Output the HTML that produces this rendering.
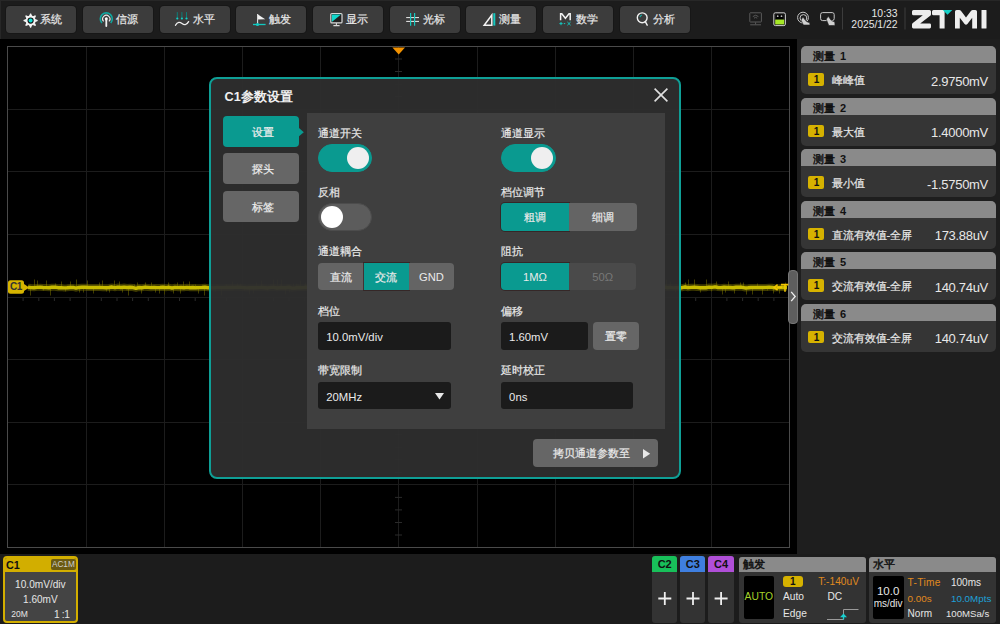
<!DOCTYPE html>
<html><head><meta charset="utf-8">
<style>
*{box-sizing:border-box;margin:0;padding:0}
html,body{width:1000px;height:624px;overflow:hidden;background:#000;font-family:"Liberation Sans",sans-serif;color:#e6e6e6}
.abs{position:absolute}
#top{left:0;top:0;width:1000px;height:39px;background:#1c1c1c;box-shadow:inset 1px 1px 0 #272727}
.tb{position:absolute;box-shadow:0 0 0 1px #171717;top:6.1px;width:70px;height:26.6px;background:#3c3c3c;border-radius:4px;font-size:10.5px;color:#e8e8e8}
.tb span{position:absolute;top:6.7px;line-height:12px;white-space:nowrap;-webkit-text-stroke:0.2px #e8e8e8}
#scope{left:0;top:0;width:797px;height:554px;background:#000}
#rp{left:797px;top:39px;width:203px;height:515px;background:#1e1e1e}
.card{position:absolute;left:3.6px;width:195.4px;height:48.2px;background:#353535;border-radius:5px;overflow:hidden}
.card .h{position:absolute;left:0;top:0;width:100%;height:17.1px;background:#8a8a8a;color:#111;font-weight:bold;font-size:11px;line-height:20.5px;padding-left:12.4px}
.card .b{position:absolute;left:7.9px;top:26.9px;width:15.9px;height:12.9px;background:#d6b200;border-radius:2px;color:#111;font-size:10px;font-weight:bold;text-align:center;line-height:13px}
.card .n{position:absolute;left:31px;top:27.2px;font-size:11px;line-height:15px;color:#e8e8e8;white-space:nowrap;-webkit-text-stroke:0.2px #e8e8e8}
.card .v{position:absolute;right:8px;top:27.5px;font-size:13px;line-height:15px;color:#e8e8e8;letter-spacing:-0.3px}
#bot{left:0;top:554px;width:1000px;height:70px;background:#1c1c1c}
#dlg{left:208.5px;top:76.5px;width:472.8px;height:402.9px;background:rgba(46,46,46,0.95);border:2px solid #0f9f96;border-radius:8px}
.dt{position:absolute;left:14px;top:11px;font-size:12.7px;font-weight:bold;line-height:14px;color:#f0f0f0;white-space:nowrap}
.tab{position:absolute;left:12.2px;width:76px;height:30.9px;background:#666;border-radius:4px;font-size:11px;line-height:32px;text-align:center;padding-left:5px;color:#eee;-webkit-text-stroke:0.2px #eee}
.tab.on{background:#0a9a90}
#inner{left:96px;top:34.5px;width:358.5px;height:315.5px;background:rgba(64,64,64,0.95)}
.lbl{position:absolute;font-size:11px;line-height:14px;color:#e8e8e8;white-space:nowrap;-webkit-text-stroke:0.2px #e8e8e8}
.tog{position:absolute;width:54.8px;height:27.9px;border-radius:14px;background:#5c5c5c;border:1px solid #4c4c4c}
.tog i{position:absolute;top:2px;left:2px;width:22px;height:22px;border-radius:50%;background:#fff}
.tog.on{background:#0a9a90;border-color:#0a9a90}
.tog.on i{left:auto;right:2px;background:#efefef}
.seg{position:absolute;height:27.7px}
.s{position:absolute;top:0;height:27.7px;background:#646464;font-size:11px;line-height:29.5px;text-align:center;color:#eaeaea;-webkit-text-stroke:0.2px #eaeaea}
.s.on{background:#0a9a90;box-shadow:0 0 0 1px rgba(50,30,30,0.7)}
.s.en{font-size:11.2px;line-height:28.5px;-webkit-text-stroke:0}
.s.dis{background:#4a4a4a;color:#787878;-webkit-text-stroke:0}
.inp{position:absolute;height:27.3px;background:#1b1b1b;border-radius:3px;font-size:11.3px;line-height:30.5px;padding-left:8.3px;color:#eaeaea}
.btn{position:absolute;background:#666;border-radius:4px;font-size:11px;text-align:center;color:#eaeaea;-webkit-text-stroke:0.2px #eaeaea}
.chc{position:absolute;top:2.2px;width:25.2px;height:66.4px;background:#333;border-radius:3px;overflow:hidden}
.chc .hd{height:15.8px;color:#111;font-weight:bold;font-size:11px;line-height:16px;text-align:center}
.pnl{position:absolute;top:2.6px;height:66px;background:#333;border-radius:3px;overflow:hidden}
.pnl .hd{height:15.1px;background:#8a8a8a;color:#111;font-weight:bold;font-size:11px;line-height:15px;padding-left:4px}
.t10{position:absolute;font-size:10.2px;line-height:11px;color:#e6e6e6;white-space:nowrap}
.k{font-weight:normal;-webkit-text-stroke:0.45px #111}
.bx{position:absolute;top:19px;height:43.6px;background:#000;border-radius:2px}
</style></head><body>
<div id="scope" class="abs">
<svg class="abs" style="left:0;top:0" width="797" height="554" viewBox="0 0 797 554"><path d="M86.5 47V547 M164.5 47V547 M242.5 47V547 M320.5 47V547 M398.5 47V547 M477.5 47V547 M555.5 47V547 M633.5 47V547 M711.5 47V547 M8 109.5H789 M8 171.5H789 M8 234.5H789 M8 297.5H789 M8 359.5H789 M8 422.5H789 M8 484.5H789" stroke="#1c1c1c" stroke-width="1" fill="none"/><path d="M23.1 298V301 M38.8 298V301 M54.4 298V301 M70.1 298V301 M101.3 298V301 M117.0 298V301 M132.6 298V301 M148.3 298V301 M179.5 298V301 M195.2 298V301 M210.8 298V301 M226.5 298V301 M257.7 298V301 M273.4 298V301 M289.0 298V301 M304.7 298V301 M335.9 298V301 M351.6 298V301 M367.2 298V301 M382.9 298V301 M414.1 298V301 M429.8 298V301 M445.4 298V301 M461.1 298V301 M492.3 298V301 M508.0 298V301 M523.6 298V301 M539.3 298V301 M570.5 298V301 M586.2 298V301 M601.8 298V301 M617.5 298V301 M648.7 298V301 M664.4 298V301 M680.0 298V301 M695.7 298V301 M726.9 298V301 M742.6 298V301 M758.2 298V301 M773.9 298V301 M395 59.0H402 M395 71.5H402 M395 84.1H402 M395 96.6H402 M395 121.7H402 M395 134.2H402 M395 146.7H402 M395 159.2H402 M395 184.3H402 M395 196.8H402 M395 209.3H402 M395 221.8H402 M395 246.9H402 M395 259.4H402 M395 271.9H402 M395 284.5H402 M395 309.5H402 M395 322.1H402 M395 334.6H402 M395 347.1H402 M395 372.1H402 M395 384.7H402 M395 397.2H402 M395 409.7H402 M395 434.8H402 M395 447.3H402 M395 459.8H402 M395 472.4H402 M395 497.4H402 M395 509.9H402 M395 522.5H402 M395 535.0H402" stroke="#2a2a2a" stroke-width="1" fill="none"/><rect x="7.5" y="46.5" width="782" height="501" stroke="#4a4a4a" stroke-width="1" fill="none"/><path d="M30.5 287.5V295.5 M34.5 287.5V279.5 M37.5 287.5V280.5 M43.5 287.5V290.5 M46.5 287.5V280.5 M50.5 287.5V295.5 M55.5 287.5V283.5 M61.5 287.5V281.5 M65.5 287.5V291.5 M70.5 287.5V281.5 M76.5 287.5V279.5 M79.5 287.5V292.5 M83.5 287.5V292.5 M87.5 287.5V280.5 M93.5 287.5V293.5 M99.5 287.5V282.5 M102.5 287.5V280.5 M106.5 287.5V291.5 M109.5 287.5V292.5 M114.5 287.5V280.5 M119.5 287.5V281.5 M122.5 287.5V292.5 M128.5 287.5V295.5 M134.5 287.5V284.5 M137.5 287.5V282.5 M141.5 287.5V293.5 M145.5 287.5V282.5 M151.5 287.5V282.5 M155.5 287.5V292.5 M159.5 287.5V293.5 M164.5 287.5V294.5 M168.5 287.5V282.5 M173.5 287.5V293.5 M177.5 287.5V282.5 M180.5 287.5V293.5 M183.5 287.5V281.5 M189.5 287.5V281.5 M195.5 287.5V284.5 M198.5 287.5V293.5 M204.5 287.5V295.5 M209.5 287.5V291.5 M215.5 287.5V291.5 M221.5 287.5V295.5 M226.5 287.5V284.5 M232.5 287.5V281.5 M237.5 287.5V283.5 M240.5 287.5V283.5 M244.5 287.5V290.5 M249.5 287.5V294.5 M253.5 287.5V293.5 M256.5 287.5V282.5 M261.5 287.5V280.5 M267.5 287.5V290.5 M273.5 287.5V279.5 M277.5 287.5V279.5 M281.5 287.5V279.5 M285.5 287.5V294.5 M289.5 287.5V292.5 M293.5 287.5V283.5 M296.5 287.5V283.5 M300.5 287.5V280.5 M305.5 287.5V282.5 M311.5 287.5V295.5 M315.5 287.5V291.5 M318.5 287.5V284.5 M323.5 287.5V295.5 M326.5 287.5V294.5 M330.5 287.5V279.5 M336.5 287.5V284.5 M339.5 287.5V295.5 M343.5 287.5V283.5 M346.5 287.5V283.5 M350.5 287.5V282.5 M353.5 287.5V291.5 M356.5 287.5V279.5 M361.5 287.5V292.5 M367.5 287.5V293.5 M373.5 287.5V291.5 M376.5 287.5V280.5 M380.5 287.5V291.5 M386.5 287.5V292.5 M392.5 287.5V283.5 M395.5 287.5V281.5 M400.5 287.5V290.5 M404.5 287.5V293.5 M409.5 287.5V282.5 M413.5 287.5V295.5 M417.5 287.5V292.5 M423.5 287.5V279.5 M429.5 287.5V283.5 M432.5 287.5V295.5 M437.5 287.5V282.5 M440.5 287.5V282.5 M444.5 287.5V292.5 M449.5 287.5V291.5 M453.5 287.5V281.5 M459.5 287.5V293.5 M463.5 287.5V280.5 M469.5 287.5V281.5 M472.5 287.5V281.5 M476.5 287.5V292.5 M482.5 287.5V281.5 M486.5 287.5V294.5 M489.5 287.5V290.5 M494.5 287.5V292.5 M500.5 287.5V281.5 M506.5 287.5V279.5 M509.5 287.5V282.5 M515.5 287.5V282.5 M521.5 287.5V281.5 M527.5 287.5V292.5 M532.5 287.5V293.5 M537.5 287.5V292.5 M543.5 287.5V294.5 M548.5 287.5V294.5 M551.5 287.5V284.5 M554.5 287.5V280.5 M560.5 287.5V295.5 M563.5 287.5V292.5 M566.5 287.5V293.5 M569.5 287.5V279.5 M575.5 287.5V294.5 M580.5 287.5V279.5 M583.5 287.5V281.5 M589.5 287.5V283.5 M592.5 287.5V290.5 M598.5 287.5V284.5 M601.5 287.5V282.5 M604.5 287.5V292.5 M608.5 287.5V294.5 M614.5 287.5V293.5 M620.5 287.5V282.5 M625.5 287.5V280.5 M629.5 287.5V282.5 M634.5 287.5V295.5 M639.5 287.5V282.5 M644.5 287.5V279.5 M648.5 287.5V283.5 M651.5 287.5V280.5 M654.5 287.5V292.5 M660.5 287.5V284.5 M663.5 287.5V291.5 M666.5 287.5V279.5 M670.5 287.5V281.5 M675.5 287.5V292.5 M680.5 287.5V291.5 M685.5 287.5V282.5 M688.5 287.5V279.5 M694.5 287.5V279.5 M700.5 287.5V292.5 M706.5 287.5V279.5 M711.5 287.5V291.5 M716.5 287.5V281.5 M722.5 287.5V294.5 M725.5 287.5V292.5 M728.5 287.5V281.5 M734.5 287.5V293.5 M740.5 287.5V282.5 M743.5 287.5V282.5 M746.5 287.5V294.5 M752.5 287.5V294.5 M757.5 287.5V283.5 M762.5 287.5V294.5 M767.5 287.5V290.5 M773.5 287.5V293.5 M779.5 287.5V293.5 M785.5 287.5V282.5" stroke="#403c00" stroke-width="1" fill="none"/><path d="M28 287.19 L31 287.59 L34 287.75 L37 287.37 L40 287.17 L43 287.48 L46 287.62 L49 287.77 L52 287.20 L55 287.18 L58 287.68 L61 287.62 L64 287.88 L67 287.75 L70 287.47 L73 287.43 L76 288.14 L79 287.43 L82 287.30 L85 287.22 L88 287.52 L91 287.54 L94 287.41 L97 287.48 L100 287.57 L103 287.67 L106 287.77 L109 287.55 L112 287.05 L115 287.68 L118 287.15 L121 287.46 L124 287.13 L127 287.50 L130 287.31 L133 287.55 L136 288.33 L139 287.49 L142 287.71 L145 287.17 L148 287.43 L151 287.67 L154 287.48 L157 287.59 L160 287.53 L163 287.25 L166 287.64 L169 287.30 L172 287.97 L175 287.37 L178 287.67 L181 287.50 L184 287.74 L187 287.35 L190 287.75 L193 287.47 L196 287.82 L199 287.66 L202 287.54 L205 287.30 L208 287.69 L211 287.62 L214 287.91 L217 287.41 L220 287.64 L223 287.63 L226 287.57 L229 287.55 L232 287.55 L235 287.35 L238 287.25 L241 287.40 L244 287.65 L247 287.88 L250 287.74 L253 287.76 L256 287.69 L259 287.67 L262 287.55 L265 287.69 L268 287.94 L271 287.42 L274 287.33 L277 287.99 L280 287.56 L283 287.74 L286 287.72 L289 287.22 L292 288.11 L295 287.94 L298 287.54 L301 287.69 L304 287.53 L307 287.28 L310 287.47 L313 287.59 L316 287.78 L319 287.68 L322 287.51 L325 287.84 L328 287.31 L331 287.70 L334 287.78 L337 287.43 L340 287.05 L343 287.27 L346 287.56 L349 287.63 L352 287.89 L355 287.25 L358 287.50 L361 287.66 L364 287.46 L367 286.91 L370 287.70 L373 288.08 L376 287.75 L379 287.27 L382 287.40 L385 287.56 L388 288.12 L391 287.65 L394 287.53 L397 287.89 L400 287.48 L403 287.97 L406 287.33 L409 287.38 L412 287.68 L415 287.86 L418 287.66 L421 287.58 L424 287.04 L427 287.32 L430 287.35 L433 287.37 L436 287.65 L439 287.42 L442 287.70 L445 287.52 L448 287.42 L451 287.53 L454 287.61 L457 287.71 L460 287.38 L463 287.44 L466 287.16 L469 287.90 L472 287.86 L475 287.46 L478 287.38 L481 287.19 L484 287.54 L487 287.55 L490 288.05 L493 287.56 L496 287.31 L499 286.89 L502 287.85 L505 287.55 L508 287.10 L511 287.55 L514 287.10 L517 288.37 L520 287.78 L523 287.64 L526 287.46 L529 286.97 L532 287.47 L535 287.11 L538 287.65 L541 286.97 L544 287.27 L547 287.80 L550 287.91 L553 287.20 L556 287.12 L559 287.72 L562 287.71 L565 287.25 L568 287.33 L571 287.33 L574 287.20 L577 287.33 L580 287.81 L583 287.67 L586 288.01 L589 287.48 L592 287.47 L595 287.25 L598 287.47 L601 287.17 L604 287.06 L607 287.67 L610 287.86 L613 287.71 L616 287.83 L619 287.56 L622 287.32 L625 287.52 L628 287.41 L631 287.22 L634 287.08 L637 287.13 L640 287.50 L643 287.54 L646 287.38 L649 287.86 L652 287.54 L655 287.65 L658 287.80 L661 287.29 L664 287.01 L667 287.69 L670 287.33 L673 287.83 L676 287.58 L679 287.75 L682 287.69 L685 286.98 L688 287.68 L691 287.33 L694 287.31 L697 287.39 L700 287.69 L703 287.72 L706 287.75 L709 287.09 L712 287.35 L715 286.91 L718 287.47 L721 287.65 L724 287.31 L727 287.56 L730 287.56 L733 287.75 L736 287.29 L739 287.29 L742 287.31 L745 287.94 L748 287.77 L751 287.47 L754 287.56 L757 287.53 L760 287.55 L763 287.45 L766 287.42 L769 287.19 L772 287.34 L775 287.91 L778 287.63 L781 287.52 L784 287.45 L787 287.52" stroke="#8a8000" stroke-opacity="0.45" stroke-width="7" fill="none"/><path d="M28 287.19 L31 287.59 L34 287.75 L37 287.37 L40 287.17 L43 287.48 L46 287.62 L49 287.77 L52 287.20 L55 287.18 L58 287.68 L61 287.62 L64 287.88 L67 287.75 L70 287.47 L73 287.43 L76 288.14 L79 287.43 L82 287.30 L85 287.22 L88 287.52 L91 287.54 L94 287.41 L97 287.48 L100 287.57 L103 287.67 L106 287.77 L109 287.55 L112 287.05 L115 287.68 L118 287.15 L121 287.46 L124 287.13 L127 287.50 L130 287.31 L133 287.55 L136 288.33 L139 287.49 L142 287.71 L145 287.17 L148 287.43 L151 287.67 L154 287.48 L157 287.59 L160 287.53 L163 287.25 L166 287.64 L169 287.30 L172 287.97 L175 287.37 L178 287.67 L181 287.50 L184 287.74 L187 287.35 L190 287.75 L193 287.47 L196 287.82 L199 287.66 L202 287.54 L205 287.30 L208 287.69 L211 287.62 L214 287.91 L217 287.41 L220 287.64 L223 287.63 L226 287.57 L229 287.55 L232 287.55 L235 287.35 L238 287.25 L241 287.40 L244 287.65 L247 287.88 L250 287.74 L253 287.76 L256 287.69 L259 287.67 L262 287.55 L265 287.69 L268 287.94 L271 287.42 L274 287.33 L277 287.99 L280 287.56 L283 287.74 L286 287.72 L289 287.22 L292 288.11 L295 287.94 L298 287.54 L301 287.69 L304 287.53 L307 287.28 L310 287.47 L313 287.59 L316 287.78 L319 287.68 L322 287.51 L325 287.84 L328 287.31 L331 287.70 L334 287.78 L337 287.43 L340 287.05 L343 287.27 L346 287.56 L349 287.63 L352 287.89 L355 287.25 L358 287.50 L361 287.66 L364 287.46 L367 286.91 L370 287.70 L373 288.08 L376 287.75 L379 287.27 L382 287.40 L385 287.56 L388 288.12 L391 287.65 L394 287.53 L397 287.89 L400 287.48 L403 287.97 L406 287.33 L409 287.38 L412 287.68 L415 287.86 L418 287.66 L421 287.58 L424 287.04 L427 287.32 L430 287.35 L433 287.37 L436 287.65 L439 287.42 L442 287.70 L445 287.52 L448 287.42 L451 287.53 L454 287.61 L457 287.71 L460 287.38 L463 287.44 L466 287.16 L469 287.90 L472 287.86 L475 287.46 L478 287.38 L481 287.19 L484 287.54 L487 287.55 L490 288.05 L493 287.56 L496 287.31 L499 286.89 L502 287.85 L505 287.55 L508 287.10 L511 287.55 L514 287.10 L517 288.37 L520 287.78 L523 287.64 L526 287.46 L529 286.97 L532 287.47 L535 287.11 L538 287.65 L541 286.97 L544 287.27 L547 287.80 L550 287.91 L553 287.20 L556 287.12 L559 287.72 L562 287.71 L565 287.25 L568 287.33 L571 287.33 L574 287.20 L577 287.33 L580 287.81 L583 287.67 L586 288.01 L589 287.48 L592 287.47 L595 287.25 L598 287.47 L601 287.17 L604 287.06 L607 287.67 L610 287.86 L613 287.71 L616 287.83 L619 287.56 L622 287.32 L625 287.52 L628 287.41 L631 287.22 L634 287.08 L637 287.13 L640 287.50 L643 287.54 L646 287.38 L649 287.86 L652 287.54 L655 287.65 L658 287.80 L661 287.29 L664 287.01 L667 287.69 L670 287.33 L673 287.83 L676 287.58 L679 287.75 L682 287.69 L685 286.98 L688 287.68 L691 287.33 L694 287.31 L697 287.39 L700 287.69 L703 287.72 L706 287.75 L709 287.09 L712 287.35 L715 286.91 L718 287.47 L721 287.65 L724 287.31 L727 287.56 L730 287.56 L733 287.75 L736 287.29 L739 287.29 L742 287.31 L745 287.94 L748 287.77 L751 287.47 L754 287.56 L757 287.53 L760 287.55 L763 287.45 L766 287.42 L769 287.19 L772 287.34 L775 287.91 L778 287.63 L781 287.52 L784 287.45 L787 287.52" stroke="#c8bc00" stroke-width="3.4" fill="none" stroke-linejoin="round"/></svg>
</div>
<div id="top" class="abs">
<div class="tb" style="left:6.2px"><span style="left:33.5px">系统</span></div>
<div class="tb" style="left:82.9px"><span style="left:33.1px">信源</span></div>
<div class="tb" style="left:159.5px"><span style="left:33.1px">水平</span></div>
<div class="tb" style="left:236.2px"><span style="left:33.1px">触发</span></div>
<div class="tb" style="left:312.9px"><span style="left:33.1px">显示</span></div>
<div class="tb" style="left:389.5px"><span style="left:33.1px">光标</span></div>
<div class="tb" style="left:466.2px"><span style="left:33.1px">测量</span></div>
<div class="tb" style="left:542.9px"><span style="left:33.1px">数学</span></div>
<div class="tb" style="left:619.5px"><span style="left:33.1px">分析</span></div>
<svg class="abs" style="left:0;top:0" width="1000" height="39" viewBox="0 0 1000 39">
 <!-- gear -->
 <g transform="translate(30.6 20.6)">
  <circle r="6" fill="#1a1a1a" opacity="0.55"/>
  <g fill="#f4f4f4"><circle r="5.1"/><path d="M-1.6 -4.5 L-0.5 -7.1 H0.5 L1.6 -4.5Z" transform="rotate(0)"/><path d="M-1.6 -4.5 L-0.5 -7.1 H0.5 L1.6 -4.5Z" transform="rotate(45)"/><path d="M-1.6 -4.5 L-0.5 -7.1 H0.5 L1.6 -4.5Z" transform="rotate(90)"/><path d="M-1.6 -4.5 L-0.5 -7.1 H0.5 L1.6 -4.5Z" transform="rotate(135)"/><path d="M-1.6 -4.5 L-0.5 -7.1 H0.5 L1.6 -4.5Z" transform="rotate(180)"/><path d="M-1.6 -4.5 L-0.5 -7.1 H0.5 L1.6 -4.5Z" transform="rotate(225)"/><path d="M-1.6 -4.5 L-0.5 -7.1 H0.5 L1.6 -4.5Z" transform="rotate(270)"/><path d="M-1.6 -4.5 L-0.5 -7.1 H0.5 L1.6 -4.5Z" transform="rotate(315)"/></g>
  <circle r="3.1" fill="#151515"/><circle r="2" fill="#12dcd4"/>
 </g>
 <!-- signal source -->
 <g transform="translate(106.3 18.8)" fill="none">
  <path d="M-4.4 4.2 A6 6 0 1 1 4.4 4.2" stroke="#10a8a0" stroke-width="1.6"/>
  <path d="M-2.6 2.6 A3.6 3.6 0 1 1 2.6 2.6" stroke="#e8e8e8" stroke-width="1.2"/>
  <circle r="1.5" fill="#fff"/>
  <path d="M0 1.5V7.2" stroke="#f0f0f0" stroke-width="1.8" stroke-linecap="round"/>
 </g>
 <!-- horizontal -->
 <g fill="none" stroke-linecap="round">
  <path d="M177.3 12.5V17.5M181.9 12.5V17.5M186.5 12.5V17.5" stroke="#0d7f78" stroke-width="1"/>
  <circle cx="177.3" cy="18.5" r="1.1" fill="#12d0c8"/><circle cx="181.9" cy="18.5" r="1.1" fill="#12d0c8"/><circle cx="186.5" cy="18.5" r="1.1" fill="#12d0c8"/>
  <path d="M175.5 25.3 C177.5 21.5 180 22 182 23.5 C184 25 186.5 25.5 188.6 21.6" stroke="#f0f0f0" stroke-width="1.3"/>
 </g>
 <!-- trigger flag -->
 <g>
  <path d="M257.2 14 L265.2 19.3 L258 19.6Z" fill="#f2f2f2"/>
  <path d="M257.6 14V23.8" stroke="#e0e0e0" stroke-width="1.1"/>
  <path d="M253 24.5H265.6" stroke="#12c8c0" stroke-width="1.3"/>
  <circle cx="257.5" cy="24.5" r="1.6" fill="#12c8c0"/>
 </g>
 <!-- display -->
 <g>
  <rect x="330.8" y="13.5" width="11.2" height="9.4" rx="1" fill="#222" stroke="#d8d8d8" stroke-width="1.2"/>
  <path d="M331.8 14.5H341L331.8 21.9Z" fill="#12d8cc"/>
  <path d="M336.4 23V25.3M333.4 25.6H339.6" stroke="#d8d8d8" stroke-width="1.1"/>
 </g>
 <!-- cursor -->
 <g>
  <path d="M406.2 17.6H419M406.2 21.4H419" stroke="#f0f0f0" stroke-width="1"/>
  <path d="M410.6 13V25.8M414.6 13V25.8" stroke="#14c8c0" stroke-width="1.2"/>
 </g>
 <!-- measure -->
 <g>
  <path d="M484.2 25.2 L491.8 15 V25.2Z" fill="none" stroke="#f2f2f2" stroke-width="1.5" stroke-linejoin="miter"/>
  <path d="M494.3 13.2V25.6" stroke="#14c8c0" stroke-width="2"/>
 </g>
 <!-- math -->
 <g>
  <path d="M560.6 20.2V13.8H561.8L565.4 18.2L569 13.8H570.2V20.2" fill="none" stroke="#f2f2f2" stroke-width="1.5"/>
  <path d="M559.4 23.6H562.6M561 22V25.2M563.8 23.6H565.2M567.4 22L570.6 25.2M570.6 22L567.4 25.2" stroke="#14c8c0" stroke-width="1"/>
 </g>
 <!-- analyze -->
 <g fill="none">
  <circle cx="642.2" cy="17.8" r="4.9" stroke="#f2f2f2" stroke-width="1.4"/>
  <path d="M645.3 21.6L647.2 25.2" stroke="#f2f2f2" stroke-width="1.4" stroke-linecap="round"/>
  <path d="M640 17.2 A2.8 2.8 0 0 1 642 15" stroke="#12b0a8" stroke-width="1.2"/>
 </g>
 <!-- status icons -->
 <g fill="none" stroke="#5a5a5a" stroke-width="1">
  <rect x="749.8" y="12.8" width="11.6" height="9.2" rx="0.5"/>
  <path d="M752.8 16.6 A4 4 0 0 1 758.4 16.6M754 18.2 A2.2 2.2 0 0 1 757.2 18.2"/>
  <path d="M755.6 22.3V24.3M750.2 24.8H761"/>
 </g>
 <g>
  <rect x="773.8" y="12.8" width="11.6" height="12.8" rx="1.5" fill="#1a1a1a" stroke="#cfcfcf" stroke-width="1"/>
  <rect x="776" y="14.6" width="7.2" height="4.6" fill="#000"/>
  <circle cx="777.7" cy="16.2" r="0.9" fill="#bbb"/><circle cx="781.5" cy="16.2" r="0.9" fill="#bbb"/>
  <rect x="775.2" y="19.6" width="9" height="4.8" fill="#a6e826"/>
 </g>
 <g fill="none" stroke="#c8c8c8" stroke-width="1">
  <circle cx="803" cy="17.6" r="5.4"/><circle cx="803.4" cy="18" r="3.4"/>
  <path d="M801 20 L803 17 L806.2 21.4 L809.7 22.8 L810 25 L803.4 25 Z" fill="#d0d0d0" stroke="#1e1e1e" stroke-width="0.6"/>
 </g>
 <g fill="none" stroke="#c8c8c8" stroke-width="1">
  <rect x="820.6" y="12.6" width="13.6" height="8" rx="2"/>
  <path d="M826.3 19.3 L828.2 16.3 L831.4 20.6 L834.8 22 L835 25.4 L828.8 25.6 Z" fill="#d0d0d0" stroke="#1e1e1e" stroke-width="0.6"/>
 </g>
 <path d="M842.5 7.5V29.5M905 7.5V29.5" stroke="#3c3c3c" stroke-width="1"/>
 <!-- logo -->
 <g fill="#eeeeee">
  <path d="M913.5 10H929.5Q931 10 931 11.5V14.2Q931 15.2 930.2 15.8L920.2 23.4H929.6Q931 23.4 931 24.8V27.1Q931 28.5 929.6 28.5H913.4Q912 28.5 912 27.1V24.5Q912 23.5 912.8 22.9L922.8 15.2H913.5Q912 15.2 912 13.7V11.5Q912 10 913.5 10Z"/>
  <path d="M933.5 10H944.6V28.5H940.2Q939.6 28.5 939.6 27.9V15.2H933.5Q932 15.2 932 13.7V11.5Q932 10 933.5 10Z"/>
  <path d="M942.8 10H952.3L947.5 14.8Z" fill="#14cfc6"/>
  <path d="M955 28.5V11.6Q955 10 956.6 10H959.2Q960.2 10 960.9 10.8L966 17.6L971.1 10.8Q971.8 10 972.8 10H975.4Q977 10 977 11.6V28.5H972.2V17.8L967.4 24Q966 25.6 964.6 24L959.8 17.8V28.5Z"/>
  <rect x="981.5" y="10" width="5" height="18.5" rx="0.6"/>
 </g>
</svg>
<div class="abs" style="left:850px;top:7.6px;width:47.6px;text-align:right;font-size:10.4px;line-height:11px;color:#e6e6e6">10:33</div>
<div class="abs" style="left:840px;top:18.8px;width:57.6px;text-align:right;font-size:10.4px;line-height:11px;color:#e6e6e6">2025/1/22</div>
</div>

<div id="rp" class="abs">
 <div class="card" style="top:7.2px"><div class="h"><b class="k">测量</b><span style="margin-left:5px">1</span></div><div class="b">1</div><div class="n">峰峰值</div><div class="v">2.9750mV</div></div>
 <div class="card" style="top:58.7px"><div class="h"><b class="k">测量</b><span style="margin-left:5px">2</span></div><div class="b">1</div><div class="n">最大值</div><div class="v">1.4000mV</div></div>
 <div class="card" style="top:110.2px"><div class="h"><b class="k">测量</b><span style="margin-left:5px">3</span></div><div class="b">1</div><div class="n">最小值</div><div class="v">-1.5750mV</div></div>
 <div class="card" style="top:161.7px"><div class="h"><b class="k">测量</b><span style="margin-left:5px">4</span></div><div class="b">1</div><div class="n">直流有效值-全屏</div><div class="v">173.88uV</div></div>
 <div class="card" style="top:213.2px"><div class="h"><b class="k">测量</b><span style="margin-left:5px">5</span></div><div class="b">1</div><div class="n">交流有效值-全屏</div><div class="v">140.74uV</div></div>
 <div class="card" style="top:264.7px"><div class="h"><b class="k">测量</b><span style="margin-left:5px">6</span></div><div class="b">1</div><div class="n">交流有效值-全屏</div><div class="v">140.74uV</div></div>
</div>
<div class="abs" style="left:788px;top:269.6px;width:9.7px;height:54.4px;background:#5e5e5e;border:1px solid #777;border-radius:4px"></div>
<svg class="abs" style="left:788px;top:285px" width="10" height="22" viewBox="0 0 10 22"><path d="M3.2 6.8L7.2 11.5L3.2 16.2" fill="none" stroke="#f0f0f0" stroke-width="1.3"/></svg>

<div id="bot" class="abs">
 <div class="abs" style="left:3px;top:2.2px;width:74.7px;height:66.4px;background:#444;border:2px solid #d2ae00;border-radius:4px;overflow:hidden">
  <div class="abs" style="left:0;top:0;width:100%;height:14px;background:#d2ae00"></div>
  <div class="abs" style="left:1px;top:2px;font-size:10.8px;line-height:11px;font-weight:bold;color:#111">C1</div>
  <div class="abs" style="left:46px;top:0.5px;width:24.7px;height:11px;background:#6b5a12;border-radius:2px;font-size:8.2px;line-height:11px;color:#cfcfcf;text-align:center">AC1M</div>
  <div class="abs" style="left:0;top:21px;width:100%;text-align:center;font-size:10.1px;line-height:11px;color:#e6e6e6">10.0mV/div</div>
  <div class="abs" style="left:0;top:36px;width:100%;text-align:center;font-size:10px;line-height:11px;color:#e6e6e6">1.60mV</div>
  <div class="abs" style="left:6.3px;top:51px;font-size:8.5px;line-height:10px;color:#e6e6e6">20M</div>
  <div class="abs" style="left:49px;top:51px;font-size:10.2px;line-height:11px;letter-spacing:-0.4px;color:#e6e6e6">1 :1</div>
 </div>
 <div class="chc" style="left:652.1px"><div class="hd" style="background:#18c05a">C2</div></div>
 <div class="chc" style="left:680.3px"><div class="hd" style="background:#3f7fe0">C3</div></div>
 <div class="chc" style="left:708.4px"><div class="hd" style="background:#b04fd8">C4</div></div>
 <svg class="abs" style="left:640px;top:36.5px" width="100" height="30" viewBox="0 0 100 30"><path d="M18.3 7.5H31.3M24.8 1V14M46.5 7.5H59.5M53 1V14M74.6 7.5H87.6M81.1 1V14" stroke="#eee" stroke-width="1.8"/></svg>
 <div class="pnl" style="left:739.4px;width:127.1px"><div class="hd"><b class="k">触发</b></div>
  <div class="bx" style="left:4.6px;width:30.5px"></div>
 </div>
 <div class="pnl" style="left:868.7px;width:127.4px"><div class="hd"><b class="k">水平</b></div>
  <div class="bx" style="left:4.2px;width:30.8px"></div>
 </div>
 <div class="t10" style="left:744.6px;top:37px;color:#a6d22a;font-size:10.3px">AUTO</div>
 <div class="abs" style="left:783px;top:22.3px;width:19.8px;height:10.8px;background:#d6b200;border-radius:3px;color:#111;font-size:10px;font-weight:bold;line-height:11px;text-align:center">1</div>
 <div class="t10" style="left:818.2px;top:22px;color:#e08a1e">T:-140uV</div>
 <div class="t10" style="left:783px;top:37px">Auto</div>
 <div class="t10" style="left:827.4px;top:37px">DC</div>
 <div class="t10" style="left:783px;top:54px">Edge</div>
 <svg class="abs" style="left:820px;top:50px" width="45" height="20" viewBox="0 0 45 20"><path d="M7 15.5H23.5V5.5H38.5" fill="none" stroke="#9a9a9a" stroke-width="1"/><path d="M23.5 9.5L20 13.2H27Z" fill="#18d0d0"/><path d="M23.5 11V15.5" stroke="#18d0d0" stroke-width="1.4"/></svg>
 <div class="t10" style="left:872.6px;top:32px;width:31px;text-align:center;font-size:11.5px">10.0</div>
 <div class="t10" style="left:871.6px;top:44px;width:33px;text-align:center;font-size:10px">ms/div</div>
 <div class="t10" style="left:907.6px;top:22.5px;color:#e08a1e;letter-spacing:0.3px">T-Time</div>
 <div class="t10" style="left:951px;top:22.5px;font-size:10px">100ms</div>
 <div class="t10" style="left:907.6px;top:38.5px;color:#e08a1e;font-size:9.9px">0.00s</div>
 <div class="t10" style="left:951px;top:38.5px;color:#1ea0d8;font-size:9.8px">10.0Mpts</div>
 <div class="t10" style="left:907.6px;top:54px;font-size:10px">Norm</div>
 <div class="t10" style="left:946px;top:54px;font-size:9.6px">100MSa/s</div>
</div>

<div id="dlg" class="abs">
 <div class="dt">C1参数设置</div>
 <svg class="abs" style="left:443.5px;top:9.5px" width="14" height="14" viewBox="0 0 14 14"><path d="M0.6 0.6L13.4 13.4M13.4 0.6L0.6 13.4" stroke="#e0e0e0" stroke-width="1.6"/></svg>
 <div class="tab on" style="top:37.3px">设置</div>
 <svg class="abs" style="left:88.2px;top:49.5px" width="6" height="9" viewBox="0 0 6 9"><path d="M0 0L4.8 4.2L0 8.3Z" fill="#0a9a90"/></svg>
 <div class="tab" style="top:74.8px">探头</div>
 <div class="tab" style="top:112.3px">标签</div>
 <div id="inner" class="abs"></div>
</div>
<!-- dialog contents in page coords -->
<div class="lbl" style="left:318px;top:125.8px">通道开关</div>
<div class="tog on" style="left:317.7px;top:144px"><i></i></div>
<div class="lbl" style="left:500.8px;top:125.8px">通道显示</div>
<div class="tog on" style="left:500.8px;top:144px"><i></i></div>
<div class="lbl" style="left:318px;top:185.1px">反相</div>
<div class="tog" style="left:317.7px;top:203px"><i></i></div>
<div class="lbl" style="left:500.8px;top:185.1px">档位调节</div>
<div class="seg" style="left:500.8px;top:203px;width:136.2px">
 <div class="s on" style="left:0;width:68.2px;border-radius:4px 0 0 4px">粗调</div>
 <div class="s" style="left:68.2px;width:68px;border-radius:0 4px 4px 0">细调</div>
</div>
<div class="lbl" style="left:318px;top:244.2px">通道耦合</div>
<div class="seg" style="left:318px;top:262.7px;width:135.8px">
 <div class="s" style="left:0;width:45.5px;border-radius:4px 0 0 4px">直流</div>
 <div class="s on" style="left:45.5px;width:45.5px;border-radius:0">交流</div>
 <div class="s en" style="left:91px;width:44.8px;border-radius:0 4px 4px 0">GND</div>
</div>
<div class="lbl" style="left:500.8px;top:244.2px">阻抗</div>
<div class="seg" style="left:500.8px;top:262.7px;width:135.5px">
 <div class="s on en" style="left:0;width:68.2px;border-radius:4px 0 0 4px">1MΩ</div>
 <div class="s dis en" style="left:68.2px;width:67.3px;border-radius:0 4px 4px 0">50Ω</div>
</div>
<div class="lbl" style="left:318px;top:303.5px">档位</div>
<div class="inp" style="left:318px;top:322.3px;width:132.8px">10.0mV/div</div>
<div class="lbl" style="left:500.8px;top:303.5px">偏移</div>
<div class="inp" style="left:500.8px;top:322.3px;width:87.1px">1.60mV</div>
<div class="btn" style="left:592.5px;top:322.3px;width:46.1px;height:27.3px;line-height:29px">置零</div>
<div class="lbl" style="left:318px;top:362.8px">带宽限制</div>
<div class="inp" style="left:318px;top:381.5px;width:132.8px">20MHz<svg class="abs" style="left:116.6px;top:11px" width="9" height="7" viewBox="0 0 9 7"><path d="M0 0H9L4.5 6.5Z" fill="#e8e8e8"/></svg></div>
<div class="lbl" style="left:500.8px;top:362.8px">延时校正</div>
<div class="inp" style="left:500.8px;top:381.5px;width:132.6px">0ns</div>
<div class="btn" style="left:533px;top:439px;width:125px;height:28.4px;line-height:28px;text-align:left;padding-left:20px">拷贝通道参数至<svg class="abs" style="left:109.7px;top:10.2px" width="8" height="10" viewBox="0 0 8 10"><path d="M0 0L7.2 4.7L0 9.4Z" fill="#e8e8e8"/></svg></div>

<svg class="abs" style="left:0;top:0" width="800" height="300" viewBox="0 0 800 300">
 <path d="M392.4 47.4H405L398.7 54.4Z" fill="#f39200"/>
 <rect x="8" y="280.2" width="16" height="13.6" rx="2.5" fill="#d6b400"/>
 <path d="M24 284L29.2 287.5L24 291Z" fill="#d6b400"/>
 <path d="M777 287.4H782M777.6 284.6L774.2 287.4L777.6 290.2" fill="none" stroke="#f2c600" stroke-width="1.6"/>
 <path d="M781 284.6H788.3M785 284.6V291.8" fill="none" stroke="#f2c600" stroke-width="1.6"/>
</svg>
<div class="abs" style="left:8px;top:281.2px;width:16px;text-align:center;font-size:10px;line-height:12px;font-weight:bold;letter-spacing:-0.3px;color:#333">C1</div>

</body></html>
